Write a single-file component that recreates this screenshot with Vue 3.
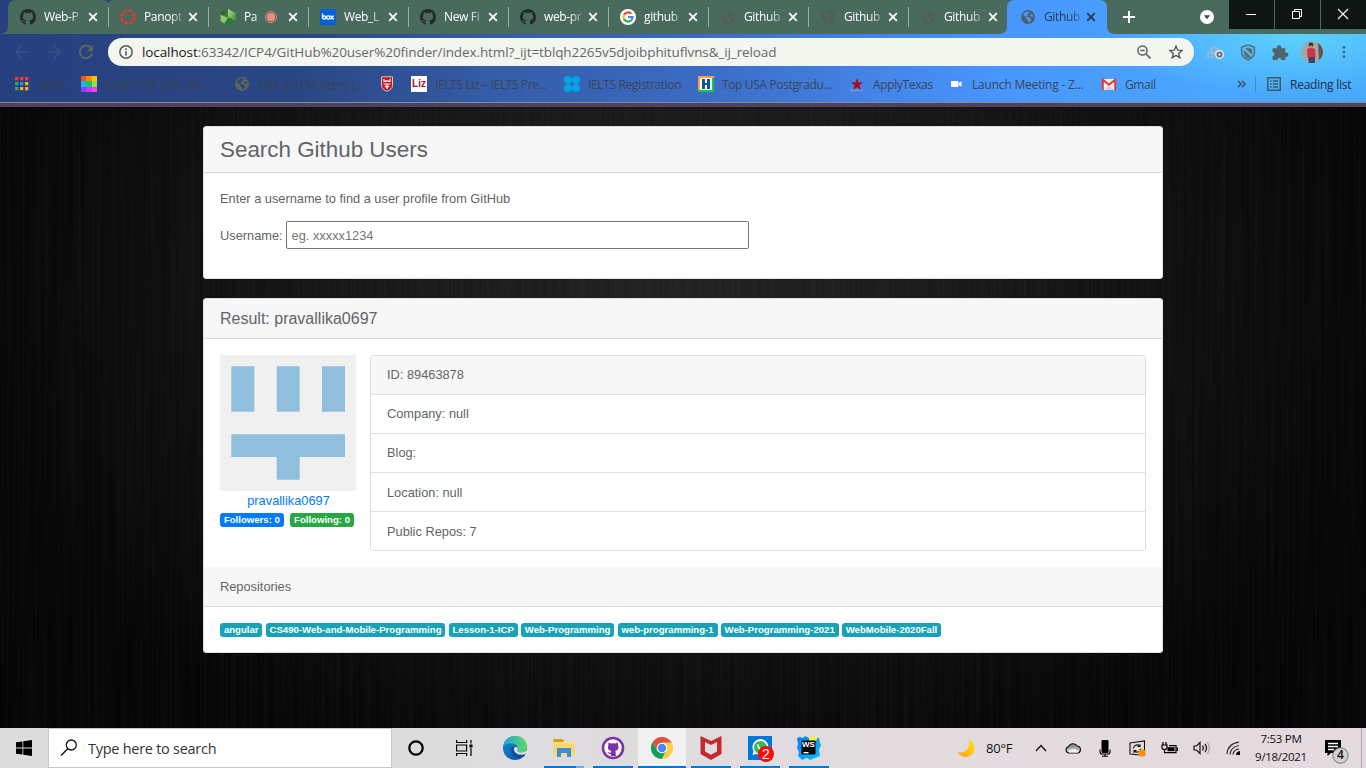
<script setup>
const tabs = [
  { icon: 'github', title: 'Web-P' },
  { icon: 'canvas', title: 'Panopt' },
  { icon: 'panopto', title: 'Pa', rec: true },
  { icon: 'box', title: 'Web_L' },
  { icon: 'github', title: 'New Fi' },
  { icon: 'github', title: 'web-pr' },
  { icon: 'google', title: 'github' },
  { icon: 'globe', title: 'Github', dim: true },
  { icon: 'globe', title: 'Github', dim: true },
  { icon: 'globe', title: 'Github', dim: true },
  { icon: 'globe', title: 'Github', active: true }
]
const bookmarks = [
  { icon: 'apps', text: 'Apps', cls: 'faint' },
  { icon: 'esign', text: 'eSign PDF with Elec...', cls: 'faint' },
  { icon: 'globe', text: 'GRE and Masters |...', cls: 'faint' },
  { icon: 'crest', text: '' },
  { icon: 'liz', text: 'IELTS Liz – IELTS Pre...' },
  { icon: 'dots4', text: 'IELTS Registration' },
  { icon: 'hbox', text: 'Top USA Postgradu...' },
  { icon: 'redstar', text: 'ApplyTexas' },
  { icon: 'zoomapp', text: 'Launch Meeting - Z...' },
  { icon: 'gmail', text: 'Gmail' }
]
const info = ['ID: 89463878', 'Company: null', 'Blog:', 'Location: null', 'Public Repos: 7']
const repos = ['angular', 'CS490-Web-and-Mobile-Programming', 'Lesson-1-ICP', 'Web-Programming', 'web-programming-1', 'Web-Programming-2021', 'WebMobile-2020Fall']
const pinned = [
  { icon: 'edge' },
  { icon: 'folder', run: 'multi' },
  { icon: 'ghdesk', run: 'on' },
  { icon: 'chrome', run: 'focus' },
  { icon: 'mcafee', run: 'on' },
  { icon: 'whatsapp', run: 'on' },
  { icon: 'webstorm', run: 'on' }
]
</script>

<template>
  <div class="screen">
    <svg class="defs" width="0" height="0">
      <defs>
        <linearGradient id="edgeA" x1="0" y1="0" x2="1" y2="0"><stop offset="0" stop-color="#1ba5dc" /><stop offset="1" stop-color="#5fdc62" /></linearGradient>
        <linearGradient id="edgeB" x1="0" y1="0" x2="1" y2="1"><stop offset="0" stop-color="#1b8ad8" /><stop offset="1" stop-color="#0c4c94" /></linearGradient>
        <linearGradient id="wsG" x1="0" y1="0" x2="1" y2="1"><stop offset="0" stop-color="#087cfa" /><stop offset="1" stop-color="#07c3f2" /></linearGradient>
        <linearGradient id="moonG" x1="0" y1="1" x2="1" y2="0"><stop offset="0" stop-color="#ff9f1a" /><stop offset="1" stop-color="#ffe600" /></linearGradient>
        <linearGradient id="cloudG" x1="0" y1="0" x2="0" y2="1"><stop offset="0" stop-color="#777" /><stop offset="1" stop-color="#ddd" /></linearGradient>
        <linearGradient id="panA" x1="0" y1="0" x2="1" y2="1"><stop offset="0" stop-color="#14532a" /><stop offset="1" stop-color="#4b9a3e" /></linearGradient>
        <linearGradient id="panB" x1="0" y1="0" x2="1" y2="1"><stop offset="0" stop-color="#b9dc8a" /><stop offset="1" stop-color="#3f8f3c" /></linearGradient>
        <symbol id="github" viewBox="0 0 16 16"><path fill="#24292e" d="M8 0C3.58 0 0 3.58 0 8c0 3.54 2.29 6.53 5.47 7.59.4.07.55-.17.55-.38 0-.19-.01-.82-.01-1.49-2.01.37-2.53-.49-2.69-.94-.09-.23-.48-.94-.82-1.13-.28-.15-.68-.52-.01-.53.63-.01 1.08.58 1.23.82.72 1.21 1.87.87 2.33.66.07-.52.28-.87.51-1.07-1.78-.2-3.64-.89-3.64-3.95 0-.87.31-1.59.82-2.15-.08-.2-.36-1.02.08-2.12 0 0 .67-.21 2.2.82.64-.18 1.32-.27 2-.27s1.36.09 2 .27c1.53-1.04 2.2-.82 2.2-.82.44 1.1.16 1.92.08 2.12.51.56.82 1.27.82 2.15 0 3.07-1.87 3.75-3.65 3.95.29.25.54.73.54 1.48 0 1.07-.01 1.93-.01 2.2 0 .21.15.46.55.38A8.01 8.01 0 0016 8c0-4.42-3.58-8-8-8z" /></symbol>
        <symbol id="canvas" viewBox="0 0 16 16"><circle cx="8" cy="8" r="6.5" fill="none" stroke="#e63a2e" stroke-width="2.6" stroke-dasharray="3.5 1.6" /></symbol>
        <symbol id="panopto" viewBox="0 0 16 16"><path fill="url(#panB)" d="M8 0l7.500 4v8L8 9z" /><path fill="url(#panA)" d="M8 0v6L.5 12V4z" /><path fill="#94c76a" d="M.5 5.500L8 9l-3.500 5.500-4-2.500z" /><path fill="#2c7d3a" d="M4.500 14L9 8l6.500 4L8 16z" /></symbol>
        <symbol id="box" viewBox="0 0 16 16"><rect width="16" height="16" rx="1.5" fill="#0061d5" /><g fill="none" stroke="#fff" stroke-width="1.3" stroke-linecap="round"><path d="M2.500 5v4M10.800 7l2.600 3M13.400 7l-2.600 3" /><circle cx="4.200" cy="8.500" r="1.600" /><circle cx="8.200" cy="8.500" r="1.600" /></g></symbol>
        <symbol id="google" viewBox="0 0 16 16"><circle cx="8" cy="8" r="8" fill="#fff" /><g fill="none" stroke-width="2.200"><path stroke="#ea4335" d="M4 6a4.500 4.500 0 0 1 7.300-1.200" /><path stroke="#fbbc05" d="M4 5.900a4.500 4.500 0 0 0 0 4.200" /><path stroke="#34a853" d="M4 10a4.500 4.500 0 0 0 7 1.400" /><path stroke="#4285f4" d="M8 8h4.500a4.500 4.500 0 0 1-1.500 3.400" /></g></symbol>
        <symbol id="globe" viewBox="0 0 16 16"><circle cx="8" cy="8" r="6.900" fill="currentColor" /><path fill="var(--land)" d="M8 2.400c1.500 0 2 .8 1 1.500L7.700 5v1.400l-1.600.4.3 1.200h2.500l.7 1.500 1.600.5-.5 1.700L9 13.600l-1-.5.2-1.900-1.700-1.200-.7-1.800-2.800-2.500C3.800 3.800 5.700 2.400 8 2.400zM11.600 5l1.700 1.700-.6 1.600-1.700-.7-.8-1.300z" /></symbol>
        <symbol id="apps" viewBox="0 0 16 16"><g><path fill="#ee3b33" d="M1 1h3.300v3.300H1zM6 1h3.300v3.300H6zM11 1h3.300v3.300H11z" /><path fill="#34a853" d="M1 6h3.300v3.300H1z" /><path fill="#2f86f6" d="M6 6h3.300v3.300H6z" /><path fill="#f3b20b" d="M6 11h3.300v3.300H6zM11 11h3.300v3.300H11zM11 6h3.300v3.300H11z" /><path fill="#34a853" d="M1 11h3.300v3.300H1z" /></g></symbol>
        <symbol id="esign" viewBox="0 0 16 16"><path fill="#f4511e" d="M0 0h6v6H0z" /><path fill="#ff8f00" d="M5 0h6v6H5z" /><path fill="#ffc400" d="M11 0h5v6h-5z" /><path fill="#12b5ff" d="M0 5h6v6H0z" /><path fill="#14c85a" d="M5 5h6v6H5z" /><path fill="#8ce24a" d="M11 5h5v6h-5z" /><path fill="#8e3dff" d="M0 11h6v5H0z" /><path fill="#c63dff" d="M5 11h6v5H5z" /><path fill="#ff3df2" d="M11 11h5v5h-5z" /></symbol>
        <symbol id="crest" viewBox="0 0 16 16"><path fill="#c4161c" stroke="#d9c4c9" d="M2.500.8h11v8.700c0 3-2.800 4.600-5.500 5.800-2.700-1.200-5.500-2.800-5.500-5.800z" /><path stroke="#fff" fill="none" stroke-width="1.200" d="M5 3v2.500h2V4M11 3v2.500H9V4M4.500 8h7M6 10l2 1.500 2-1.500M8 8v5" /></symbol>
        <symbol id="dots4" viewBox="0 0 16 16"><g fill="#00a4e4"><circle cx="4" cy="4" r="4" /><circle cx="12" cy="4" r="4" /><circle cx="4" cy="12" r="4" /><circle cx="12" cy="12" r="4" /></g></symbol>
        <symbol id="hbox" viewBox="0 0 16 16"><path fill="#ff9d42" d="M0 0h16v2H2v14H0z" /><path fill="#10c94a" d="M14 2h2v14H0v-2h14z" /><path fill="#fff" d="M2 2h12v12H2z" /><path fill="#07588f" d="M4 3h3v4h2V3h3v10H9V9H7v4H4z" /></symbol>
        <symbol id="redstar" viewBox="0 0 16 16"><path fill="#6f9be0" d="M1 13.500h13V15H1z" /><path fill="#b5080e" d="M8 2l1.500 4.500H14l-3.700 2.800 1.500 4.700L8 11.200 4.200 14l1.500-4.700L2 6.500h4.500z" /></symbol>
        <symbol id="zoomapp" viewBox="0 0 16 16"><rect width="16" height="16" rx="4.500" fill="#4a8cff" /><path fill="#fff" d="M3 5h6.500q1 0 1 1v5H4q-1 0-1-1zM11 7l2.500-1.800v5.600L11 9z" /></symbol>
        <symbol id="gmail" viewBox="0 0 16 16"><path fill="#f3eeee" d="M1 3h14v11H1z" /><path fill="#d8d4d6" d="M3 14l5-5 5 5z" /><path fill="none" stroke="#e33b2f" stroke-width="2" d="M1.800 14V3.700L8 8.800l6.200-5.100V14" /></symbol>
        <symbol id="edge" viewBox="0 0 24 24"><circle cx="12" cy="12" r="12" fill="url(#edgeB)" /><path fill="url(#edgeA)" d="M.3 10C1.500 4 6.500 0 12.500 0 19 0 24 5 24 10.500c0 4-3 6-6.200 6-3 0-4.300-1-3.300-2.500 1.500-2.300-.2-5.800-4.500-6.300C5.500 7.200 1.500 8.500.3 10z" /><path fill="#114b92" d="M8.500 12c-1.500 4 1.500 9.500 7.500 10 2.500 0 5-1.500 6.500-3.500-4 2-9.500 1-11.300-1.700-1.200-1.800-.7-3.800.3-4.800-1-.7-2.500-.5-3 0z" /><path fill="#dfdcde" d="M11 12.200c-.8 3 2.500 6.800 7.500 6.600 2.200 0 3.700-.8 4.500-1.600l-.5 1.800 2.500 1V12c-1 3-4 4.500-7 4.500-3 0-4.500-1-3.500-2.500.5-.8.500-1.600.3-2.300-.8-1.300-3-1-3.800.5z" /></symbol>
        <symbol id="folder" viewBox="0 0 24 24"><path fill="#d99c0c" d="M1.500 3h9l1.500 2v3H1.500z" /><path fill="#fbd668" d="M1.500 6H22.500v13.500h-21z" /><path fill="#fde391" d="M1.500 6h21v1.500h-21z" /><path fill="#3b8ed4" d="M5 12h14v9h-4v-4H9v4H5z" /></symbol>
        <symbol id="ghdesk" viewBox="0 0 24 24"><circle cx="12" cy="12" r="11.300" fill="#7d33a5" /><circle cx="12" cy="12" r="8.700" fill="#fff" /><path fill="#7d33a5" d="M7.300 6.500l2.500 1q2.200-.5 4.400 0l2.500-1 .3 2.800c1.500 3-.2 5.200-2.800 5.700.6 1 .6 2 .6 5h-5v-2c-2 .5-2.500-1-3.300-2 1.500-.3 1.500 1.200 3.300.8 0-.8.200-1.400.5-1.800-2.800-.5-4.300-2.700-2.900-5.700z" /></symbol>
        <symbol id="chrome" viewBox="0 0 24 24"><circle cx="12" cy="12" r="11" fill="#ffcd40" /><path fill="#de5145" d="M2.500 6.500A11 11 0 0 1 21.500 6.500H12L7.500 14.500z" /><path fill="#149c5d" d="M2.400 6.600A11 11 0 0 0 11.500 23l5-8.500-4.500 2.500-4.700-2.500z" /><circle cx="12" cy="12" r="5.300" fill="#fff" /><circle cx="12" cy="12" r="4.200" fill="#4688f4" /></symbol>
        <symbol id="mcafee" viewBox="0 0 24 24"><path fill="#c7282f" d="M1.500 0L12 5l10.500-5v18L12 24 1.500 18zM6 6v9.500l6 3.300 6-3.300V6l-6 3z" fill-rule="evenodd" /></symbol>
        <symbol id="whatsapp" viewBox="0 0 28 28"><path fill="#0078d7" d="M0 0h24v24H0z" /><path fill="#fff" d="M4.500 19l1-4a8 8 0 1 1 3 3z" /><circle cx="12.500" cy="11.500" r="6.500" fill="#34b849" /><path fill="none" stroke="#fff" stroke-width="2" d="M10 8.500c-.3 3 2.500 6 5.500 6" /><circle cx="18" cy="18" r="8" fill="#ff0808" /></symbol>
        <symbol id="webstorm" viewBox="0 0 24 24"><path fill="url(#wsG)" d="M0 2l3-1 3 1 2-2 4 2 5-1 5 1 1 5 1 2-2 5 1 6-5 2-5 2-3-2-5 2-4-4 1-4-2-4 1-4z" /><path fill="#f8f43b" d="M12 1h9l-2 4h-7z" /><path fill="#050505" d="M4.500 4.500h14v14h-14z" /><path fill="#fff" d="M6.500 16h5v1.400h-5z" /></symbol>
      </defs>
    </svg>

    <header class="browser">
      <div class="strip">
        <svg class="strip-bg" width="1366" height="34" viewBox="0 0 1366 34"><path fill="#486b5d" d="M0 34q8 0 8-8V8q0-8 8-8h86q5 0 6.500 3Q110 0 115 0H1366v34H1115q-8 0-8-8V8q0-8-8-8h-84q-8 0-8 8v18q0 8-8 8z" /></svg>
        <div v-for="(t, i) in tabs" :key="i" class="tab" :class="{ active: t.active, dim: t.dim, bare: i > 8 }">
          <svg class="i16"><use :href="'#' + t.icon" /></svg>
          <span class="title" :class="{ short: t.rec }">{{ t.title }}</span>
          <svg v-if="t.rec" class="rec" width="12" height="12" viewBox="0 0 12 12"><circle cx="6" cy="6" r="5.400" fill="none" stroke="#f28b82" /><circle cx="6" cy="6" r="4" fill="#f28b82" /></svg>
          <svg class="x" width="10" height="10" viewBox="0 0 10 10"><path d="M1.200 1.200l7.600 7.600M8.800 1.200L1.200 8.800" stroke="currentColor" stroke-width="1.800" /></svg>
        </div>
        <svg class="plus" width="12" height="12" viewBox="0 0 12 12"><path d="M6 0v12M0 6h12" stroke="#fff" stroke-width="2" /></svg>
        <svg class="drop" width="14" height="14" viewBox="0 0 14 14"><circle cx="7" cy="7" r="7" fill="#fff" /><path fill="#355447" d="M3.800 5.300h6.400L7 9.300z" /></svg>
        <div class="wins">
          <div><svg width="12" height="12"><path d="M1 6.500h10" stroke="#fff" /></svg></div>
          <div><svg width="12" height="12"><path d="M1.500 3.500h7v7h-7zM3.500 3.500v-2h7v7h-2" fill="none" stroke="#fff" /></svg></div>
          <div><svg width="12" height="12"><path d="M1 1l10 10M11 1L1 11" stroke="#fff" stroke-width="1.100" /></svg></div>
        </div>
      </div>

      <div class="toolbar">
        <svg class="nav" viewBox="0 0 16 16"><path d="M15 8H2M8 1.800L1.800 8 8 14.200" fill="none" stroke="#3b507e" stroke-width="1.500" /></svg>
        <svg class="nav" viewBox="0 0 16 16"><path d="M1 8h13M8 1.800L14.200 8 8 14.200" fill="none" stroke="#3b507e" stroke-width="1.500" /></svg>
        <svg class="nav" viewBox="0 0 16 16"><path d="M13.300 4.200A6.300 6.300 0 1 0 14.200 9.500" fill="none" stroke="#586863" stroke-width="2" /><path fill="#586863" d="M15 1v6.300H8.700z" /></svg>
        <div class="omni">
          <svg width="14" height="14" viewBox="0 0 14 14"><circle cx="7" cy="7" r="6.200" fill="none" stroke="#55595c" stroke-width="1.500" /><path d="M7 6.200v4.300M7 3.300v1.600" stroke="#55595c" stroke-width="1.600" /></svg>
          <span class="url"><b>localhost</b>:63342/ICP4/GitHub%20user%20finder/index.html?_ijt=tblqh2265v5djoibphituflvns&amp;_ij_reload</span>
          <svg class="mag" width="14" height="14" viewBox="0 0 14 14"><circle cx="5.500" cy="5.500" r="4.600" fill="none" stroke="#5b605f" stroke-width="1.500" /><path d="M9 9l4.500 4.500M3.300 5.500h4.400" stroke="#5b605f" stroke-width="1.600" /></svg>
          <svg class="star" width="14" height="14" viewBox="0 0 14 14"><path d="M7 1l1.700 4.200 4.400.3-3.400 2.900 1.100 4.400L7 10.400l-3.800 2.400 1.100-4.400L.9 5.500l4.400-.3z" fill="none" stroke="#55595c" stroke-width="1.400" /></svg>
        </div>
        <div class="exts">
          <svg viewBox="0 0 18 16"><path fill="none" stroke="#a9b7c5" stroke-width="2" d="M2 13a3 3 0 0 1 0-5M4.500 9a3.500 3.500 0 0 1 6-4.500M6 13a3 3 0 0 1 2-5 4 4 0 0 1 6-2" /><circle cx="12.500" cy="10" r="3.800" fill="#6a7379" stroke="#e6edf4" stroke-width="1.400" /><circle cx="12.500" cy="10" r="1" fill="#fff" /></svg>
          <svg viewBox="0 0 16 16"><path d="M8 1l6 2v4.500c0 3.500-2.500 6-6 7.500-3.500-1.500-6-4-6-7.500V3z" fill="none" stroke="#58717c" stroke-width="1.500" /><path fill="#58717c" d="M5.500 4.300L8 3.400l4 1.300V8.500q0 .8-.3 1.500zM4 5.500l6.800 6.200q-1.200 1.200-2.800 2-4-2-4-6.200z" /></svg>
          <svg viewBox="0 0 16 16"><path fill="#51636a" d="M1 4h4a2.200 2.200 0 1 1 4.200 0H13v4a2.200 2.200 0 1 1 0 4.200V15H9.500a2.200 2.200 0 0 0-4.300 0H1v-3.500a2.200 2.200 0 0 0 0-4.300z" /></svg>
          <svg class="me" viewBox="0 0 22 22"><circle cx="11" cy="11" r="11" fill="#a3a7a9" /><path fill="#6b5149" d="M17 2q5 4 5 9t-4 8z" /><circle cx="10" cy="4" r="2.400" fill="#3b2724" /><path fill="#c28d78" d="M8.500 4.500h3V8h-3z" /><path fill="#cf3344" d="M6 8q4-2 8 0l.5 8h-8z" /><path fill="#40485d" d="M7 16h7v6H8z" /></svg>
          <svg class="menu" viewBox="0 0 16 16"><g fill="#496774"><circle cx="8" cy="2.700" r="1.600" /><circle cx="8" cy="8" r="1.600" /><circle cx="8" cy="13.300" r="1.600" /></g></svg>
        </div>
      </div>

      <div class="marks">
        <div class="mark-grid">
          <div v-for="b in bookmarks" :key="b.icon" class="mark" :class="[b.cls, b.icon]">
            <span v-if="b.icon === 'liz'" class="lizbox">Liz</span>
            <svg v-else class="i16"><use :href="'#' + b.icon" /></svg>
            <span>{{ b.text }}</span>
          </div>
        </div>
        <svg class="more" width="9" height="8" viewBox="0 0 9 8"><path d="M1 .8L4 4 1 7.200M5 .8L8 4 5 7.200" fill="none" stroke="#3c5c70" stroke-width="1.700" /></svg>
        <i class="vline"></i>
        <svg class="rl" width="14" height="14" viewBox="0 0 14 14"><path d="M.7.700h12.600v12.600H.7zM3 4h1.600M6 4h5M3 7h1.600M6 7h5M3 10h1.600M6 10h5" fill="none" stroke="#3f596a" stroke-width="1.500" /></svg>
        <span class="reading">Reading list</span>
      </div>
    </header>

    <main class="page">
      <svg class="grain" width="1366" height="621"><filter id="brush" x="0" y="0" width="100%" height="100%"><feTurbulence type="fractalNoise" baseFrequency="0.4 0.004" numOctaves="2" seed="4" /><feColorMatrix values="0 0 0 0 1  0 0 0 0 1  0 0 0 0 1  .06 0 0 0 -.02" /></filter><rect width="1366" height="621" filter="url(#brush)" /></svg>
      <section class="card search">
        <h3>Search Github Users</h3>
        <div class="search-body">
          <p>Enter a username to find a user profile from GitHub</p>
          <label>Username: <input placeholder="eg. xxxxx1234" /></label>
        </div>
      </section>
      <section class="card result">
        <h5>Result: pravallika0697</h5>
        <div class="profile">
          <div class="who">
            <svg width="136" height="136" viewBox="0 0 136 136"><path fill="#f0f0f0" d="M0 0h136v136H0z" /><path fill="#90bfdd" d="M11.300 11.300h23v45.500h-23zM56.700 11.300h23v45.500h-23zM102 11.300h23v45.500h-23zM11.300 79.300H125v22.800H79.700v22.700h-23v-22.700H11.300z" /></svg>
            <a>pravallika0697</a>
            <div class="counts"><span class="badge blue">Followers: 0</span><span class="badge green">Following: 0</span></div>
          </div>
          <ul><li v-for="s in info" :key="s">{{ s }}</li></ul>
        </div>
        <div class="repo-head">Repositories</div>
        <div class="repos"><span v-for="r in repos" :key="r" class="badge teal">{{ r }}</span></div>
      </section>
    </main>

    <footer class="taskbar">
      <div class="start"><svg width="16" height="16" viewBox="0 0 16 16"><path d="M0 2.300L6.500 1.400v6.200H0zM7.300 1.300L16 0v7.600H7.300zM0 8.400h6.500v6.200L0 13.700zM7.300 8.400H16V16l-8.700-1.300z" /></svg></div>
      <div class="find"><svg width="18" height="18" viewBox="0 0 18 18"><circle cx="11.300" cy="6" r="5" fill="none" stroke="#111" stroke-width="1.300" /><path d="M7.700 9.700L1 16.500" stroke="#111" stroke-width="1.400" /></svg><span>Type here to search</span></div>
      <div class="tb"><svg width="16" height="16"><circle cx="8" cy="8" r="6.700" fill="none" stroke="#000" stroke-width="2.200" /></svg></div>
      <div class="tb view"><svg width="17" height="16" viewBox="0 0 17 16"><path d="M.6 0v2.500h10V0M.6 16v-2.500h10V16M.6 5h10v6H.6zM15 0v3.500M15 8v8" fill="none" stroke="#000" stroke-width="1.200" /><path d="M13.500 4.500h3v3h-3z" /></svg></div>
      <div class="pins">
        <div v-for="p in pinned" :key="p.icon" class="pin" :class="['app-' + p.icon, p.run]">
          <svg class="app"><use :href="'#' + p.icon" /></svg>
          <b v-if="p.icon === 'whatsapp'" class="num">2</b>
          <b v-if="p.icon === 'webstorm'" class="ws">WS</b>
        </div>
      </div>
      <div class="tray">
        <div class="c28"><svg width="19" height="19" viewBox="0 0 19 19"><path fill="url(#moonG)" d="M11.500.5A9 9 0 1 1 .5 13Q7 14.500 10.500 10 13.500 5 11.500.5z" /></svg></div>
        <span class="temp">80°F</span>
        <div><svg width="12" height="8"><path d="M1 7l5-5.500L11 7" fill="none" stroke="#111" stroke-width="1.300" /></svg></div>
        <div><svg width="17" height="12" viewBox="0 0 17 12"><path fill="url(#cloudG)" stroke="#111" stroke-width="1.100" d="M4 11a3.200 3.200 0 0 1-.5-6.300A5 5 0 0 1 12.300 4 3.600 3.600 0 0 1 13 11z" /><path fill="#f3f3f3" d="M4 10.400a2 2 0 0 1 2-2.900q4-2 6 1l1.500.5-.5 1.400z" /></svg></div>
        <div><svg width="12" height="17" viewBox="0 0 12 17"><rect x="2.500" y="0" width="7" height="13" rx="1" /><path d="M1 9.500v2.500q0 2 2 2h6q2 0 2-2V9.500M6 14v2.500M3 16.300h6" fill="none" stroke="#000" stroke-width="1.100" /></svg></div>
        <div><svg width="17" height="17" viewBox="0 0 17 17"><path d="M1 3l14.500-2v14.500L1 14zM4.500 8.500a3.500 3.500 0 0 1 6-2.500M11 4.300v2.200H8.500M11.500 8.500a3.500 3.500 0 0 1-6 2.500M5 13v-2.500h2.500" fill="none" stroke="#111" stroke-width="1.100" /><circle cx="13" cy="13" r="3.700" fill="#ff9500" /></svg></div>
        <div><svg width="17" height="14" viewBox="0 0 17 14"><path d="M2 1v3M5 1v3M1 4h5v2.500q0 2-2.500 2t-2.500-2zM3.500 8.500v3.200h11.500v-7H8M16.400 6.500v3.500" fill="none" stroke="#000" stroke-width="1.200" /><path d="M6.500 6.200h7v4h-7z" /></svg></div>
        <div><svg width="17" height="14" viewBox="0 0 17 14"><path d="M1 5h2.500L7 1.500v11L3.500 9H1zM9.500 4.500q1.800 2.500 0 5M12 2.800q3 4.200 0 8.400" fill="none" stroke="#111" stroke-width="1.200" /><path d="M14.300 1q4 6 0 12" fill="none" stroke="#999" /></svg></div>
        <div><svg width="14" height="14" viewBox="0 0 14 14"><path d="M1 13Q1.500 3 13 1.200M4 13.500Q4.500 6 13 4.500M7 13.500Q7.500 8.500 13 7.800" fill="none" stroke="#333" stroke-width="1.200" /><path d="M10 14q0-3.500 4-4v4z" /></svg></div>
        <div class="clock"><span>7:53 PM</span><span>9/18/2021</span></div>
        <div class="note"><svg width="25" height="25" viewBox="0 0 25 25"><path d="M0 1h16v13H6l-3.500 3v-3H0z" /><path d="M3 4.500h10M3 7.500h10M3 10.500h6" stroke="#fff" stroke-width="1.300" /><circle cx="15.500" cy="16.500" r="7.700" fill="#d4cfd2" stroke="#777" /></svg><b>4</b></div>
        <i class="desk"></i>
      </div>
    </footer>
  </div>
</template>

<style>
html, body { margin: 0; overflow: hidden; }
</style>
<style scoped>
* { box-sizing: border-box; }
.screen { width: 1366px; height: 768px; display: flex; flex-direction: column; overflow: hidden; font-family: "Open Sans", "Noto Sans", sans-serif; }
.defs { position: absolute; }
svg { display: block; flex: none; }
.i16 { width: 16px; height: 16px; }
.browser { height: 107px; flex: none; border-bottom: 4px solid #4d4264; background: radial-gradient(ellipse 190px 60px at 1296px 36px, #5bd2ff 0, rgba(91,210,255,0) 100%), linear-gradient(90deg, #274080 0, #2a4785 300px, #355da8 500px, #3b6bc4 700px, #4382e4 860px, #4896ff 1000px, #4aa5ff 1200px, #48a9fa 1366px); display: flex; flex-direction: column; }
.strip { height: 34px; flex: none; display: flex; align-items: center; padding-left: 8px; position: relative; }
.strip-bg { position: absolute; left: 0; top: 0; }
.tab { width: 100px; height: 20px; flex: none; padding: 0 10px 0 12px; display: flex; align-items: center; position: relative; color: #fff; --land: #486b5d; }
.tab::after { content: ""; position: absolute; right: -1px; top: 0; width: 1px; height: 20px; background: #a0aea8; }
.tab.bare::after { display: none; }
.title { margin-left: 8px; width: 39px; font-size: 12px; letter-spacing: -.35px; white-space: nowrap; line-height: 18px; -webkit-mask-image: linear-gradient(90deg, #000 65%, rgba(0,0,0,.2) 100%); mask-image: linear-gradient(90deg, #000 65%, rgba(0,0,0,.2) 100%); }
.title.short { width: 16px; }
.rec { margin-left: 5px; }
.x { margin-left: auto; }
.dim .i16 { color: #515f57; }
.active { color: #233b4c; --land: #4a98f8; padding-right: 12px; }
.active .i16 { color: #4d6067; }
.plus { margin-left: 15px; position: relative; }
.drop { margin-left: 65px; position: relative; }
.wins { position: relative; margin-left: auto; align-self: flex-start; display: flex; gap: 1px; }
.wins div { width: 45px; height: 29px; background: #0e1513; display: grid; place-items: center; padding: 0 2px 1px 0; }
.toolbar { height: 36px; flex: none; display: flex; align-items: center; padding-left: 14px; }
.nav { width: 16px; height: 16px; margin-right: 16px; }
.omni { width: 1086px; height: 28px; margin-left: -2px; border-radius: 14px; background: #f3f6ee; display: flex; align-items: center; padding: 0 11px; }
.url { margin-left: 9px; font-size: 13.500px; color: #64686b; white-space: nowrap; width: 660px; letter-spacing: -.1px; }
.url b { font-weight: 400; color: #16191b; }
.mag { margin-left: auto; }
.star { margin-left: 18px; }
.exts { display: flex; align-items: center; margin-left: 13px; }
.exts svg { width: 18px; height: 17px; margin-right: 14px; }
.exts .me { width: 22px; height: 22px; margin-right: 13px; margin-left: -2px; }
.exts .menu { width: 16px; height: 14px; margin: 0; }
.marks { height: 33px; flex: none; display: flex; align-items: center; border-bottom: 1px solid #83907e; padding: 0 0 4px 14px; font-size: 12px; white-space: nowrap; letter-spacing: -.36px; color: #3a4658; }
.mark-grid { display: grid; grid-template-columns: 67px 153px 145px 32px 153px 134px 151px 99px 153px 60px; width: 1223px; }
.mark { display: flex; align-items: center; gap: 8px; --land: #2a4681; }
.mark .i16 { color: #5b6457; }
.mark.faint { color: #384352; }
.lizbox { width: 16px; height: 16px; background: #fff; color: #a8121c; font: 700 10px/16px "Liberation Sans", sans-serif; text-align: center; letter-spacing: 0; }
.zoomapp { letter-spacing: -.2px; }
.vline { width: 1px; height: 16px; background: #4e86bb; margin: 0 11px 0 9px; }
.reading { margin-left: 9px; color: #1d3045; letter-spacing: -.25px; }

.page { height: 621px; position: relative; flex: none; padding: 19px 203px 0; background: radial-gradient(ellipse 720px 520px at 50% 30%, #212121 0, #181818 40%, #0b0b0b 80%, #050505 100%); font-family: "Liberation Sans", Arial, sans-serif; font-size: 12.800px; color: #626467; }
.grain { position: absolute; left: 0; top: 0; }
.card { position: relative; width: 960px; background: #fff; border: 1px solid #dfdfdf; border-radius: 3px; overflow: hidden; }
.search { height: 153px; margin-bottom: 19px; }
.result { height: 355px; }
h3, h5, p, ul { margin: 0; padding: 0; font-weight: 400; }
h3 { height: 46px; background: #f7f7f7; border-bottom: 1px solid #d9d9d9; padding-left: 16px; font-size: 22.400px; line-height: 45px; }
h5 { height: 40px; background: #f7f7f7; border-bottom: 1px solid #d9d9d9; padding-left: 16px; font-size: 16px; line-height: 40px; }
.search-body { padding: 16px; }
p { line-height: 19px; margin-bottom: 13px; }
label { display: flex; align-items: center; gap: 3px; }
input { width: 463px; height: 28px; border: 1px solid #767676; border-radius: 2px; padding: 0 5px; font: 12.800px "Liberation Sans", Arial, sans-serif; }
input::placeholder { color: #757575; }
.profile { height: 228px; padding: 16px; display: flex; justify-content: space-between; }
.who { width: 136px; display: flex; flex-direction: column; align-items: center; }
.who a { color: #007bff; line-height: 19px; padding-left: 1px; }
.counts { width: 136px; display: flex; gap: 6.400px; margin-top: 3px; }
.badge { display: block; height: 13.500px; border-radius: 3px; padding: 0 3.900px; color: #fff; font-size: 9.600px; font-weight: 700; line-height: 14px; white-space: nowrap; }
.blue { background: #007bff; } .green { background: #28a745; } .teal { background: #17a2b8; }
ul { width: 776px; height: 196px; list-style: none; border: 1px solid #dfdfdf; border-radius: 3px; display: grid; grid-template-rows: 39px 39px 39px 39px 38px; }
li { padding-left: 16px; display: flex; align-items: center; border-bottom: 1px solid #dfdfdf; }
li:nth-child(-n+3) { padding-bottom: 2px; }
li:first-child { background: #f7f7f7; }
li:last-child { border-bottom: 0; }
.repo-head { height: 40px; background: #f7f7f7; border-bottom: 1px solid #d9d9d9; padding-left: 16px; line-height: 39px; }
.repos { display: flex; gap: 3.200px; padding: 16px; }

.taskbar { height: 40px; flex: none; display: flex; background: linear-gradient(90deg, #dadbdb 0, #dddcde 500px, #e3dbdf 1000px, #e4d9de 100%); color: #111; }
.start { width: 48px; display: grid; place-items: center; }
.find { width: 344px; background: #fff; border: 1px solid #c6c6c6; display: flex; align-items: center; padding-left: 11px; font-size: 14.500px; letter-spacing: -.27px; color: #333; }
.find span { margin-left: 10px; white-space: nowrap; }
.tb { width: 48px; display: grid; place-items: center; }
.pins { display: flex; gap: 1px; margin-left: 3px; }
.pin { width: 48px; height: 40px; position: relative; display: grid; place-items: center; }
.app { width: 24px; height: 24px; }
.app-whatsapp .app { width: 28px; height: 28px; margin: 4px 0 0 4px; }
.on::after, .multi::after, .focus::after { content: ""; position: absolute; left: 4px; right: 4px; bottom: 0; height: 2px; background: #0078d7; }
.multi::after { background: linear-gradient(90deg, #0078d7 32px, #69aee6 32px); }
.focus { background: #f2f1f2; }
.focus::after { left: 0; right: 0; }
.num { position: absolute; left: 26px; top: 16px; font: 400 14px/20px "Liberation Sans", sans-serif; color: #fff; }
.ws { position: absolute; left: 17px; top: 12px; font: 700 8px/10px "Liberation Sans", sans-serif; color: #fff; }
.tray { margin-left: auto; display: flex; align-items: stretch; }
.tray > div { width: 32px; display: grid; place-items: center; }
.tray > .c28 { width: 28px; }
.temp { width: 45px; padding-left: 6px; line-height: 41px; font-size: 13px; letter-spacing: -.2px; }
.tray > .clock { width: 62px; padding: 0 0 1px 2px; display: flex; flex-direction: column; justify-content: center; align-items: center; font-size: 11.500px; line-height: 18px; letter-spacing: -.3px; }
.tray > .note { width: 50px; display: block; place-items: start; position: relative; padding: 11px 0 0 14px; }
.note b { position: absolute; left: 26px; top: 19px; font-size: 12px; line-height: 16px; font-weight: 600; }
.desk { width: 5px; border-left: 1px solid #aaa5a8; }
</style>
